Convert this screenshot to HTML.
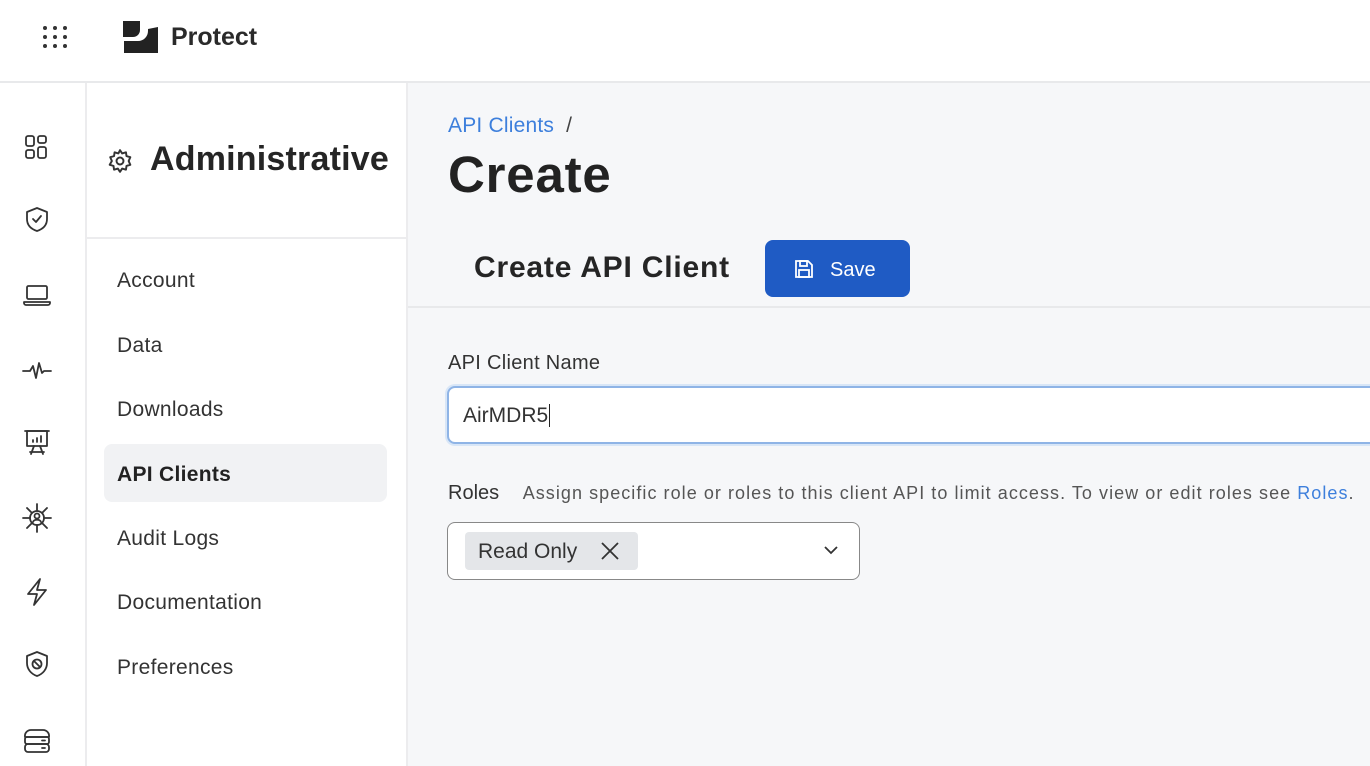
<!DOCTYPE html>
<html><head><meta charset="utf-8"><style>
*{box-sizing:border-box;margin:0;padding:0}
body{width:1370px;height:766px;overflow:hidden;font-family:"Liberation Sans",sans-serif;color:#222;background:#fff;position:relative}
.abs{position:absolute}
.top{left:0;top:0;width:1370px;height:83px;background:#fff;border-bottom:2px solid #e8e9eb}
.rail{left:0;top:83px;width:87px;height:683px;background:#fff;border-right:2px solid #ececee}
.side{left:87px;top:83px;width:321px;height:683px;background:#fff;border-right:2px solid #ececee}
.main{left:408px;top:83px;width:962px;height:683px;background:#f6f7f9}
.item{position:absolute;left:30px;font-size:21px;color:#333;letter-spacing:.3px}
svg.i{position:absolute;fill:none;stroke:#333;stroke-width:1.8;stroke-linecap:round;stroke-linejoin:round}
</style></head><body>
<div class="abs top">
 <svg class="abs" style="left:42px;top:25px" width="28" height="24" viewBox="0 0 28 24" fill="#333"><circle cx="3" cy="3" r="2"/><circle cx="13" cy="3" r="2"/><circle cx="23" cy="3" r="2"/><circle cx="3" cy="12" r="2"/><circle cx="13" cy="12" r="2"/><circle cx="23" cy="12" r="2"/><circle cx="3" cy="21" r="2"/><circle cx="13" cy="21" r="2"/><circle cx="23" cy="21" r="2"/></svg>
 <svg class="abs" style="left:123px;top:20px" width="36" height="34" viewBox="0 0 36 34" fill="#222"><path d="M0 1h17v9a7 7 0 0 1-7 7H0z"/><path d="M35 7v26H1V21h14a10 10 0 0 0 10-10V9z"/></svg>
 <div class="abs" style="left:171px;top:23px;font-size:25px;font-weight:bold;color:#2a2a2a">Protect</div>
</div>
<div class="abs rail">
 <svg class="i" style="left:24px;top:51px" width="26" height="28" viewBox="0 0 26 28"><rect x="2" y="2" width="8" height="10" rx="2"/><rect x="14" y="2" width="8" height="7" rx="2"/><rect x="2" y="16" width="8" height="8" rx="2"/><rect x="14" y="13" width="8" height="11" rx="2"/></svg>
 <svg class="i" style="left:24px;top:123px" width="26" height="28" viewBox="0 0 26 28"><path d="M13 2l10 4v7c0 6-4 10-10 12C7 23 3 19 3 13V6z"/><path d="M9 13l3 3 5-6"/></svg>
 <svg class="i" style="left:23px;top:200px" width="28" height="24" viewBox="0 0 28 24"><rect x="4" y="3" width="20" height="13" rx="1.5"/><path d="M1 19h26v1a2 2 0 0 1-2 2H3a2 2 0 0 1-2-2z"/></svg>
 <svg class="i" style="left:22px;top:275px" width="30" height="26" viewBox="0 0 30 26"><path d="M1 13h7l3-5 3 12 3-15 3 10 2-2h7"/></svg>
 <svg class="i" style="left:24px;top:345px" width="26" height="30" viewBox="0 0 26 30"><path d="M1 3h24"/><rect x="3" y="3" width="20" height="15"/><path d="M9 14v-2M13 14v-4M17 14v-6M7 26l3-8M19 26l-3-8M6 24h14"/></svg>
 <svg class="i" style="left:22px;top:420px" width="30" height="30" viewBox="0 0 30 30"><circle cx="15" cy="15" r="7"/><circle cx="15" cy="13" r="2.5"/><path d="M11 19c1-3 7-3 8 0M15 1v7M15 22v7M1 15h7M22 15h7M5 5l5 5M20 20l5 5M25 5l-5 5M10 20l-5 5"/></svg>
 <svg class="i" style="left:24px;top:494px" width="26" height="30" viewBox="0 0 26 30"><path d="M16 2L4 17h9l-3 11 12-15h-9z"/></svg>
 <svg class="i" style="left:24px;top:567px" width="26" height="30" viewBox="0 0 26 30"><path d="M13 2l10 4v7c0 6-4 11-10 13C7 24 3 19 3 13V6z"/><circle cx="13" cy="14" r="4.5"/><path d="M10 11l6 6"/></svg>
 <svg class="i" style="left:22px;top:644px" width="30" height="28" viewBox="0 0 30 28"><path d="M3 10a6 6 0 0 1 6-7h12a6 6 0 0 1 6 7z"/><rect x="3" y="10" width="24" height="7" rx="2"/><rect x="3" y="17" width="24" height="8" rx="3"/><path d="M20 13.5h3M20 21h3"/></svg>
</div>
<div class="abs side">
 <svg class="i" style="left:20px;top:65px" width="26" height="26" viewBox="0 0 24 24"><circle cx="12" cy="12" r="3.2"/><path d="M12 2l2 3 3.5-1 .5 3.5 3.5 1-1.5 3.5 1.5 3.5-3.5 1-.5 3.5-3.5-1-2 3-2-3-3.5 1-.5-3.5-3.5-1L4.5 12 3 8.5l3.5-1L7 4l3.5 1z"/></svg>
 <div class="abs" style="left:63px;top:57px;font-size:34px;font-weight:bold;color:#252525;letter-spacing:.2px">Administrative</div>
 <div class="abs" style="left:0;top:154px;width:319px;height:2px;background:#ececee"></div>
 <div class="abs" style="left:17px;top:361px;width:283px;height:58px;background:#f1f2f4;border-radius:8px"></div>
 <div class="item" style="top:186px">Account</div>
 <div class="item" style="top:251px">Data</div>
 <div class="item" style="top:315px">Downloads</div>
 <div class="item" style="top:380px;font-weight:bold;color:#222">API Clients</div>
 <div class="item" style="top:444px">Audit Logs</div>
 <div class="item" style="top:508px">Documentation</div>
 <div class="item" style="top:573px">Preferences</div>
</div>
<div class="abs main">
 <div class="abs" style="left:40px;top:31px;font-size:21px;color:#3d7fdc;letter-spacing:.2px">API Clients <span style="color:#444;margin-left:6px">/</span></div>
 <div class="abs" style="left:40px;top:62px;font-size:51px;font-weight:bold;color:#222;letter-spacing:.8px">Create</div>
 <div class="abs" style="left:66px;top:168px;font-size:30px;font-weight:bold;color:#252525;letter-spacing:.8px">Create API Client</div>
 <div class="abs" style="left:357px;top:157px;width:145px;height:57px;background:#1f5bc4;border-radius:8px;color:#fff;font-size:20px">
  <svg class="abs" style="left:29px;top:19px" width="20" height="20" viewBox="0 0 20 20" fill="none" stroke="#fff" stroke-width="1.8"><path d="M2 2h12l4 4v12H2z"/><rect x="6" y="2" width="7" height="5"/><rect x="5" y="11" width="10" height="7"/></svg>
  <span class="abs" style="left:65px;top:19px">Save</span>
 </div>
 <div class="abs" style="left:0;top:223px;width:962px;height:2px;background:#e8e9eb"></div>
 <div class="abs" style="left:40px;top:269px;font-size:20px;color:#333;letter-spacing:.3px">API Client Name</div>
 <div class="abs" style="left:39px;top:303px;width:940px;height:58px;background:#fff;border:2px solid #8fb4e6;border-radius:8px;box-shadow:0 0 0 2px #d8e6f7"><span class="abs" style="left:14px;top:16px;font-size:21px;color:#333">AirMDR5<span style="border-left:1.5px solid #222;margin-left:1px"></span></span></div>
 <div class="abs" style="left:40px;top:399px;font-size:20px;color:#333;white-space:nowrap">Roles <span style="font-size:18px;color:#555;margin-left:18px;letter-spacing:1.05px">Assign specific role or roles to this client API to limit access. To view or edit roles see <span style="color:#3d7fdc">Roles</span>.</span></div>
 <div class="abs" style="left:39px;top:439px;width:413px;height:58px;background:#fff;border:1.5px solid #888;border-radius:8px">
  <div class="abs" style="left:17px;top:9px;width:173px;height:38px;background:#e4e6e9;border-radius:4px;font-size:21px;color:#333;padding:8px 0 0 13px">Read Only
   <svg class="abs" style="left:136px;top:10px" width="18" height="18" viewBox="0 0 18 18" stroke="#333" stroke-width="1.8"><path d="M1 1l16 16M17 1L1 17"/></svg></div>
  <svg class="abs" style="left:376px;top:23px" width="14" height="9" viewBox="0 0 14 9" fill="none" stroke="#333" stroke-width="1.8"><path d="M1 1l6 6 6-6"/></svg>
 </div>
</div>
</body></html>
